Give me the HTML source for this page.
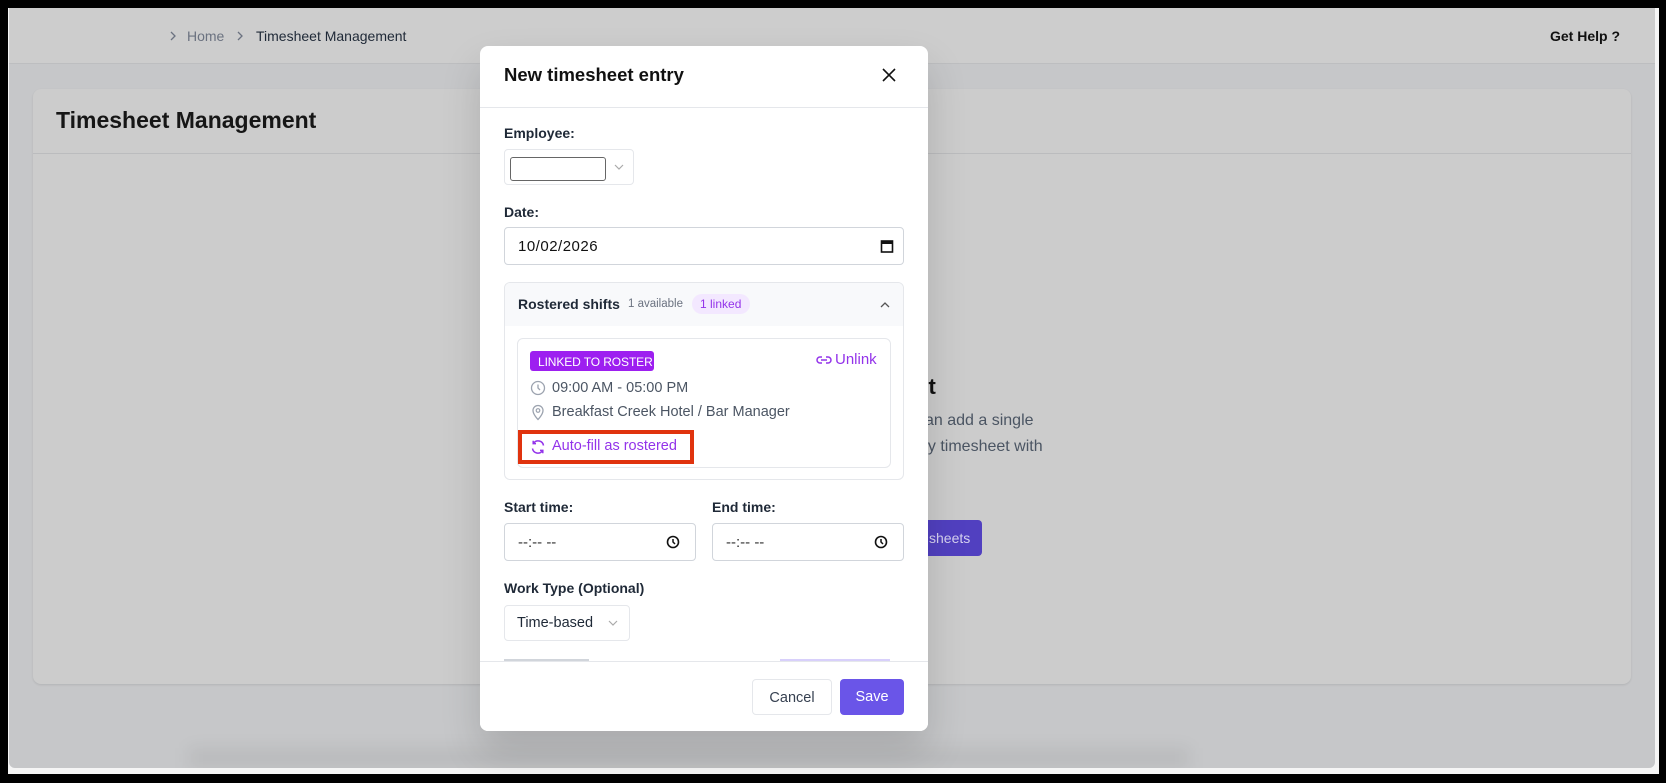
<!DOCTYPE html>
<html><head><meta charset="utf-8"><style>
*{box-sizing:border-box;margin:0;padding:0}
body{width:1666px;height:783px;background:#000;position:relative;overflow:hidden;font-family:"Liberation Sans",sans-serif;color:#111827}
.a{position:absolute}
.page{left:8px;top:8px;width:1651px;height:766px;background:#f5f5f5}
.bg{left:9px;top:8px;width:1646px;height:760px;background:#c6c7c9;border-radius:0 0 6px 6px;overflow:hidden}
.top{left:0;top:0;width:1646px;height:56px;background:#cdcdcd;border-bottom:1px solid #bdbec0}
.card{left:24px;top:81px;width:1598px;height:595px;background:#cccccc;border-radius:8px;box-shadow:0 1px 2px rgba(0,0,0,.1)}
.modal{left:480px;top:46px;width:448px;height:685px;background:#fff;border-radius:8px;overflow:hidden;box-shadow:0 20px 40px rgba(0,0,0,.15)}
.lbl{font-size:14px;font-weight:bold;color:#1f2937}
.inp{border:1px solid #d1d5db;border-radius:4px;background:#fff}
.muted{color:#4b5563}
.pur{color:#9333ea}
div{white-space:nowrap}
</style></head><body>
<div class="a page"></div>
<div class="a bg">
 <div class="a top">
  <svg class="a" style="left:159px;top:22px" width="10" height="12" viewBox="0 0 10 12"><path d="M3 2l4 4-4 4" fill="none" stroke="#6b7280" stroke-width="1.3"/></svg>
  <div class="a muted" style="left:178px;top:20px;font-size:14px;color:#6b7280">Home</div>
  <svg class="a" style="left:226px;top:22px" width="10" height="12" viewBox="0 0 10 12"><path d="M3 2l4 4-4 4" fill="none" stroke="#6b7280" stroke-width="1.3"/></svg>
  <div class="a" style="left:247px;top:20px;font-size:14px;color:#1f2937">Timesheet Management</div>
  <div class="a" style="left:1541px;top:20px;font-size:14px;font-weight:bold;color:#111">Get Help ?</div>
 </div>
 <div class="a card">
  <div class="a" style="left:0;top:64px;width:1598px;height:1px;background:#bbbcbe"></div>
  <div class="a" style="left:23px;top:18px;font-size:23px;font-weight:bold;color:#161616">Timesheet Management</div>
  <div class="a" style="left:882px;top:285px;font-size:22px;font-weight:bold;color:#111">nt</div>
  <div class="a" style="left:884px;top:323px;font-size:16px;color:#4b5563">can add a single</div>
  <div class="a" style="left:886px;top:349px;font-size:16px;color:#4b5563">ny timesheet with</div>
  <div class="a" style="left:870px;top:431px;width:79px;height:36px;background:#5140c0;border-radius:4px;color:#d6d2f0;font-size:14px;padding:10px 0 0 26px">sheets</div>
 </div>
 <div class="a" style="left:180px;top:740px;width:1000px;height:20px;background:rgba(0,0,0,.06);filter:blur(8px)"></div>
</div>

<div class="a modal">
 <div class="a" style="left:24px;top:18px;font-size:18.5px;font-weight:bold;color:#111">New timesheet entry</div>
 <svg class="a" style="left:401px;top:21px" width="16" height="16" viewBox="0 0 16 16"><path d="M2 2l12 12M14 2L2 14" stroke="#111" stroke-width="1.6"/></svg>
 <div class="a" style="left:0;top:61px;width:448px;height:1px;background:#e5e7eb"></div>

 <div class="a lbl" style="left:24px;top:79px">Employee:</div>
 <div class="a inp" style="left:24px;top:103px;width:130px;height:36px;border-color:#e5e7eb"></div>
 <div class="a" style="left:30px;top:111px;width:96px;height:24px;border:1px solid #666;border-radius:3px"></div>
 <svg class="a" style="left:133px;top:116px" width="12" height="10" viewBox="0 0 12 10"><path d="M2 3l4 4 4-4" fill="none" stroke="#aaa" stroke-width="1.2"/></svg>

 <div class="a lbl" style="left:24px;top:158px">Date:</div>
 <div class="a inp" style="left:24px;top:181px;width:400px;height:38px"></div>
 <div class="a" style="left:38px;top:192px;font-size:15px;color:#111;letter-spacing:.5px">10/02/2026</div>
 <svg class="a" style="left:400px;top:193px" width="14" height="14" viewBox="0 0 14 14"><rect x="1.5" y="2" width="11" height="11" fill="none" stroke="#111" stroke-width="1.6"/><rect x="1.5" y="2" width="11" height="3" fill="#111"/></svg>

 <div class="a" style="left:24px;top:236px;width:400px;height:198px;border:1px solid #e5e7eb;border-radius:6px;overflow:hidden">
  <div class="a" style="left:0;top:0;width:400px;height:43px;background:#f8f9fb"></div>
  <div class="a" style="left:13px;top:13px;font-size:14px;font-weight:bold;color:#1f2937">Rostered shifts</div>
  <div class="a" style="left:123px;top:15px;font-size:11.5px;color:#6b7280">1 available</div>
  <div class="a" style="left:187px;top:11px;width:58px;height:20px;background:#f3e8ff;border-radius:10px;font-size:12px;color:#9333ea;padding:3px 0 0 8px">1 linked</div>
  <svg class="a" style="left:374px;top:17px" width="12" height="10" viewBox="0 0 12 10"><path d="M2 7l4-4 4 4" fill="none" stroke="#555" stroke-width="1.3"/></svg>
  <div class="a" style="left:12px;top:55px;width:374px;height:130px;border:1px solid #e5e7eb;border-radius:6px"></div>
 </div>
 <div class="a" style="left:50px;top:305px;width:124px;height:20px;background:#9d1ff0;border-radius:3px;color:#fff;font-size:12px;padding:4px 0 0 8px;letter-spacing:-.1px">LINKED TO ROSTER</div>
 <svg class="a" style="left:336px;top:307px" width="16" height="14" viewBox="0 0 16 14"><path d="M6 4H4a3 3 0 000 6h2M10 4h2a3 3 0 010 6h-2M5 7h6" fill="none" stroke="#9333ea" stroke-width="1.5"/></svg>
 <div class="a pur" style="left:355px;top:305px;font-size:15px">Unlink</div>
 <svg class="a" style="left:50px;top:334px" width="16" height="16" viewBox="0 0 16 16"><circle cx="8" cy="8" r="6.5" fill="none" stroke="#9ca3af" stroke-width="1.3"/><path d="M8 4.5V8l2 2" fill="none" stroke="#9ca3af" stroke-width="1.3"/></svg>
 <div class="a muted" style="left:72px;top:334px;font-size:14.5px">09:00 AM - 05:00 PM</div>
 <svg class="a" style="left:50px;top:358px" width="16" height="17" viewBox="0 0 16 17"><path d="M8 15.5s-5-5-5-9a5 5 0 0110 0c0 4-5 9-5 9z" fill="none" stroke="#9ca3af" stroke-width="1.3"/><circle cx="8" cy="6.5" r="1.8" fill="none" stroke="#9ca3af" stroke-width="1.2"/></svg>
 <div class="a muted" style="left:72px;top:358px;font-size:14.5px">Breakfast Creek Hotel / Bar Manager</div>
 <div class="a" style="left:38px;top:384px;width:176px;height:34px;border:4px solid #e0330e"></div>
 <svg class="a" style="left:50px;top:393px" width="16" height="16" viewBox="0 0 16 16"><path d="M13.5 6.5A5.5 5.5 0 003.6 4.2M2.5 9.5a5.5 5.5 0 009.9 2.3" fill="none" stroke="#9333ea" stroke-width="1.5"/><path d="M3.2 1.8v2.8h2.8M12.8 14.2v-2.8H10" fill="none" stroke="#9333ea" stroke-width="1.5"/></svg>
 <div class="a pur" style="left:72px;top:392px;font-size:14.5px">Auto-fill as rostered</div>

 <div class="a lbl" style="left:24px;top:453px">Start time:</div>
 <div class="a lbl" style="left:232px;top:453px">End time:</div>
 <div class="a inp" style="left:24px;top:477px;width:192px;height:38px"></div>
 <div class="a inp" style="left:232px;top:477px;width:192px;height:38px"></div>
 <div class="a" style="left:38px;top:488px;font-size:15px;color:#333">--:-- --</div>
 <div class="a" style="left:246px;top:488px;font-size:15px;color:#333">--:-- --</div>
 <svg class="a" style="left:186px;top:489px" width="14" height="14" viewBox="0 0 14 14"><circle cx="7" cy="7" r="5.5" fill="none" stroke="#111" stroke-width="1.6"/><path d="M7 4v3l2 2" fill="none" stroke="#111" stroke-width="1.5"/></svg>
 <svg class="a" style="left:394px;top:489px" width="14" height="14" viewBox="0 0 14 14"><circle cx="7" cy="7" r="5.5" fill="none" stroke="#111" stroke-width="1.6"/><path d="M7 4v3l2 2" fill="none" stroke="#111" stroke-width="1.5"/></svg>

 <div class="a lbl" style="left:24px;top:534px">Work Type (Optional)</div>
 <div class="a inp" style="left:24px;top:559px;width:126px;height:36px;border-color:#e5e7eb"></div>
 <div class="a" style="left:37px;top:569px;font-size:14.5px;color:#1f2937">Time-based</div>
 <svg class="a" style="left:127px;top:572px" width="12" height="10" viewBox="0 0 12 10"><path d="M2 3l4 4 4-4" fill="none" stroke="#aaa" stroke-width="1.2"/></svg>
 <div class="a" style="left:24px;top:613px;width:85px;height:3px;background:#d1d5db"></div>
 <div class="a" style="left:300px;top:613px;width:110px;height:3px;background:#d8d0fb"></div>
 <div class="a" style="left:0;top:615px;width:448px;height:70px;background:#fff;border-top:1px solid #e5e7eb"></div>
 <div class="a" style="left:272px;top:633px;width:80px;height:36px;border:1px solid #e5e7eb;border-radius:4px;font-size:14.5px;color:#374151;text-align:center;padding-top:10px">Cancel</div>
 <div class="a" style="left:360px;top:633px;width:64px;height:36px;background:#6a55e8;border-radius:4px;font-size:14.5px;color:#fff;text-align:center;padding-top:10px">Save</div>
</div>
</body></html>
